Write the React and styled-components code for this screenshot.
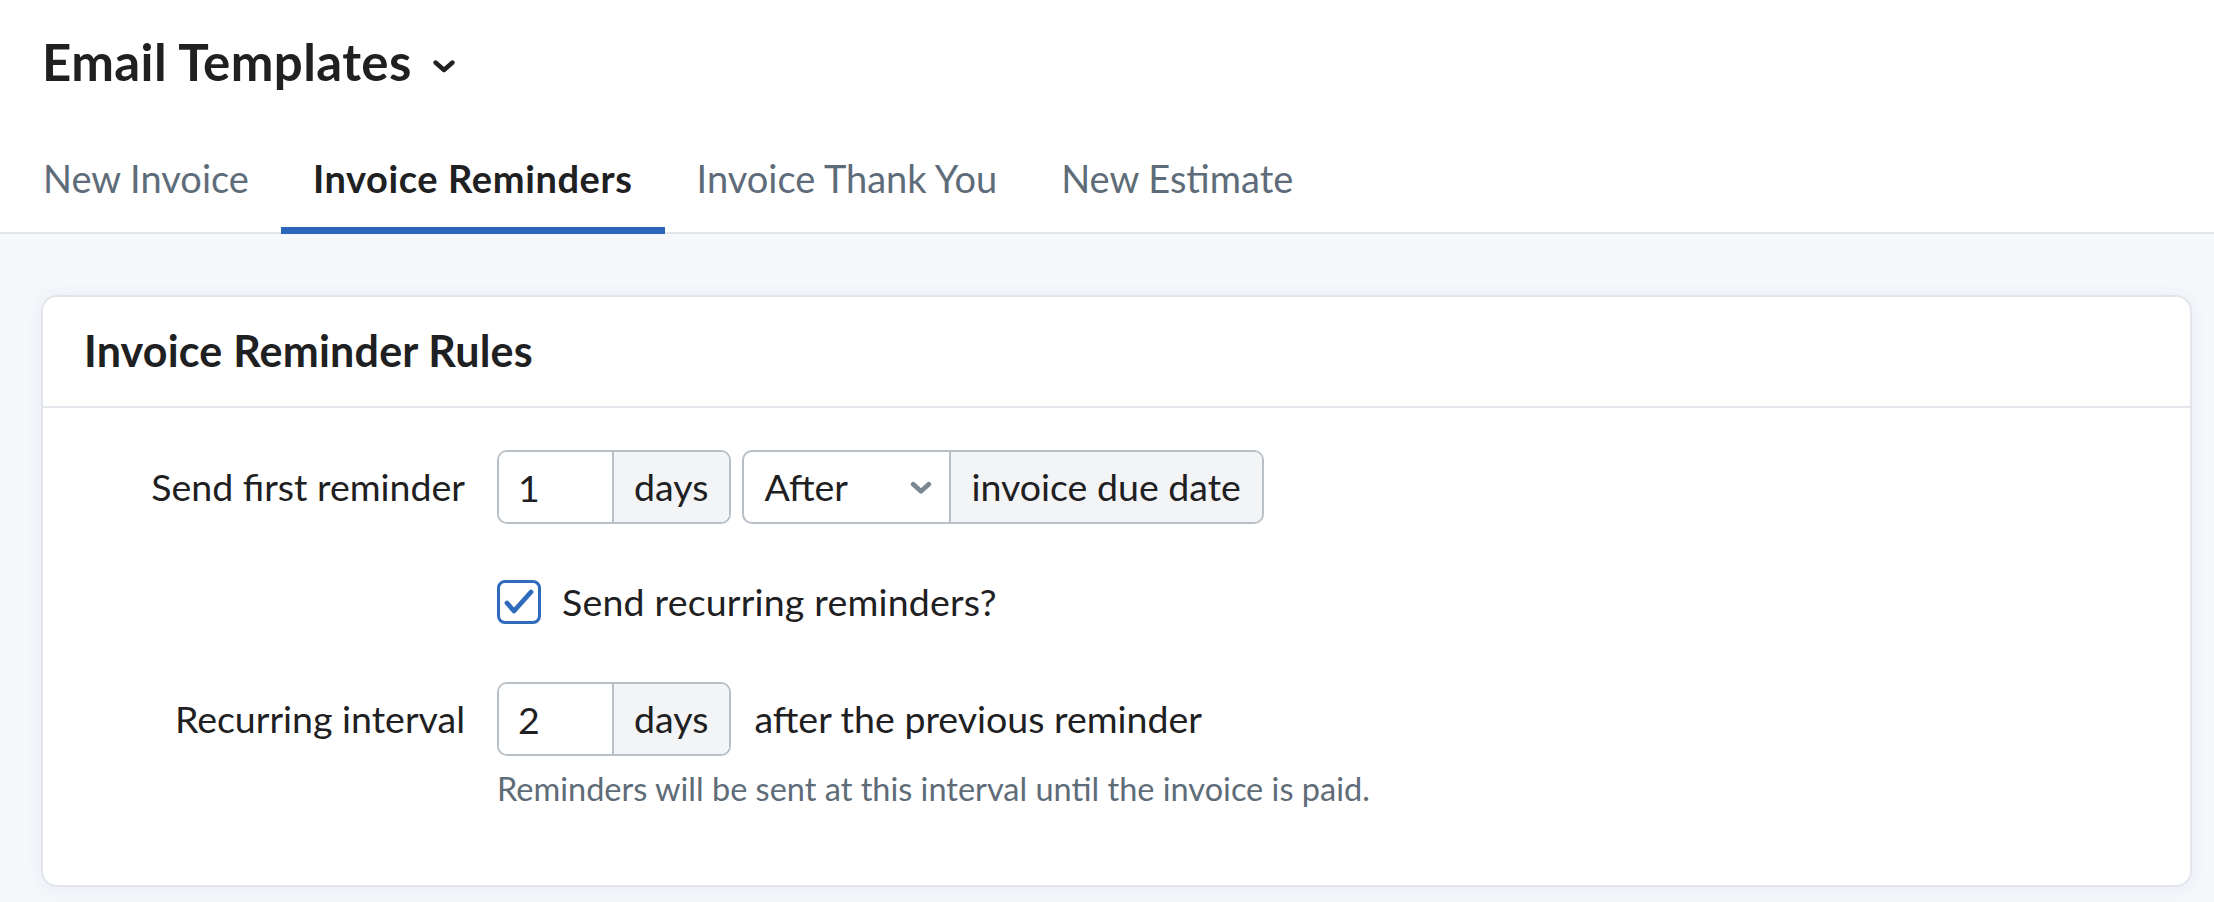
import React, { useState } from 'react';
import styled, { createGlobalStyle } from 'styled-components';

const Global = createGlobalStyle`
  html, body { margin: 0; padding: 0; }
  body {
    background: #fff;
    font-family: 'Lato', 'Noto Sans', sans-serif;
    color: #1e2022;
  }
  #root { min-height: 100vh; display: flex; flex-direction: column; }
`;

const Page = styled.div`
  flex: 1; display: flex; flex-direction: column;
`;

const TitleRow = styled.div`
  display: flex; align-items: center; gap: 20px;
  margin-top: 32px; padding-left: 42px;
`;

const Title = styled.h1`
  margin: 0;
  font-size: 51px; line-height: 60px; font-weight: 700;
  letter-spacing: 0.4px;
  color: #1e2022;
`;

const TitleCaret = styled.svg`
  width: 24px; height: 14px; margin-top: 8px;
`;

const TabBar = styled.div`
  display: flex;
  margin-top: 63px; padding-left: 11px;
  border-bottom: 2px solid #e2e6ea;
`;

const Tab = styled.button`
  appearance: none; background: none; border: 0; cursor: pointer;
  font-family: inherit;
  font-size: 38px; line-height: 46px;
  font-weight: ${(p) => (p.$active ? 700 : 400)};
  letter-spacing: ${(p) => (p.$active ? '0.6px' : '0')};
  color: ${(p) => (p.$active ? '#1e2022' : '#5e6c79')};
  padding: 0 32px 26px;
  border-bottom: 7px solid ${(p) => (p.$active ? '#2b66ba' : 'transparent')};
  margin-bottom: -2px;
`;

const Content = styled.div`
  flex: 1;
  background: #f5f7fb;
  padding: 61px 22px 15px 41px;
`;

const Card = styled.section`
  background: #fff;
  border: 2px solid #e2e5ea;
  border-radius: 16px;
  box-shadow: 0 2px 18px rgba(40, 70, 130, 0.06);
`;

const CardHeader = styled.div`
  padding: 28px 41px 29px;
  border-bottom: 2px solid #e4e7eb;
`;

const CardTitle = styled.h2`
  margin: 0;
  font-size: 43px; line-height: 52px; font-weight: 700;
  letter-spacing: 0.2px;
  color: #1e2022;
`;

const CardBody = styled.div`
  display: grid;
  grid-template-columns: 422px auto;
  column-gap: 32px;
  padding: 42px 0 76px;
`;

const Label = styled.label`
  grid-column: 1;
  text-align: right;
  align-self: center;
  margin-top: ${(p) => p.$top || 0}px;
  font-size: 37.5px; line-height: 46px;
  color: #1e2022;
`;

const Controls = styled.div`
  grid-column: 2;
  display: flex; align-items: center; gap: ${(p) => p.$gap || 11}px;
  margin-top: ${(p) => p.$top || 0}px;
`;

const Group = styled.div`
  display: inline-flex;
  height: 74px;
  box-sizing: border-box;
  border: 2px solid #b8bfc6;
  border-radius: 10px;
  overflow: hidden;
  background: #fff;
`;

const Field = styled.input`
  box-sizing: border-box;
  width: ${(p) => p.$w}px;
  border: 0; outline: none; margin: 0;
  padding: 0 0 0 19px;
  font-family: inherit; font-size: 37.5px;
  color: #1e2022; background: #fff;
`;

const Addon = styled.span`
  display: flex; align-items: center;
  padding: 0 21px 0 20px;
  border-left: 2px solid #b8bfc6;
  background: #f3f4f6;
  font-size: 37.5px; line-height: 46px;
  color: #1e2022;
  white-space: nowrap;
`;

const SelectBox = styled.div`
  display: flex; align-items: center; justify-content: space-between;
  box-sizing: border-box;
  width: 205px;
  padding: 0 17px 0 20px;
  font-size: 37.5px; line-height: 46px;
  color: #1e2022;
  cursor: pointer;
`;

const SelectCaret = styled.svg`
  width: 22px; height: 13px;
`;

const Trailing = styled.span`
  font-size: 37.5px; line-height: 46px;
  color: #1e2022;
  white-space: nowrap;
`;

const CheckRow = styled.label`
  display: flex; align-items: center; gap: 21px;
  font-size: 37.5px; line-height: 46px;
  letter-spacing: 0.2px;
  color: #1e2022;
  cursor: pointer;
`;

const Box = styled.span`
  box-sizing: border-box;
  width: 44px; height: 44px;
  border: 3px solid #2f6bbd;
  border-radius: 8px;
  background: #fff;
  display: flex; align-items: center; justify-content: center;
`;

const Help = styled.div`
  grid-column: 2;
  margin-top: 13px;
  font-size: 32.5px; line-height: 40px;
  color: #5e6c78;
`;

const TABS = ['New Invoice', 'Invoice Reminders', 'Invoice Thank You', 'New Estimate'];

function Chevron({ as: C, color, width }) {
  return (
    <C viewBox="0 0 24 14" fill="none">
      <path d="M3.5 3.5l8.5 7.5 8.5-7.5" stroke={color} strokeWidth={width} strokeLinecap="round" strokeLinejoin="round" />
    </C>
  );
}

export default function App() {
  const [active, setActive] = useState(1);
  const [checked, setChecked] = useState(true);

  return (
    <Page>
      <Global />
      <TitleRow>
        <Title>Email Templates</Title>
        <Chevron as={TitleCaret} color="#1e2022" width={4.4} />
      </TitleRow>

      <TabBar>
        {TABS.map((t, i) => (
          <Tab key={t} $active={i === active} onClick={() => setActive(i)}>{t}</Tab>
        ))}
      </TabBar>

      <Content>
        <Card>
          <CardHeader>
            <CardTitle>Invoice Reminder Rules</CardTitle>
          </CardHeader>

          <CardBody>
            <Label>Send first reminder</Label>
            <Controls>
              <Group>
                <Field $w={113} defaultValue="1" />
                <Addon>days</Addon>
              </Group>
              <Group>
                <SelectBox>
                  <span>After</span>
                  <Chevron as={SelectCaret} color="#7b8792" width={5.2} />
                </SelectBox>
                <Addon>invoice due date</Addon>
              </Group>
            </Controls>

            <Controls $top={55}>
              <CheckRow onClick={() => setChecked((c) => !c)}>
                <Box>
                  {checked && (
                    <svg width="30" height="26" viewBox="0 0 30 26" fill="none">
                      <path d="M3 14l7 8L27 3" stroke="#2f6bbd" strokeWidth="4.8" strokeLinecap="round" strokeLinejoin="round" />
                    </svg>
                  )}
                </Box>
                Send recurring reminders?
              </CheckRow>
            </Controls>

            <Label $top={57}>Recurring interval</Label>
            <Controls $top={57} $gap={23}>
              <Group>
                <Field $w={113} defaultValue="2" />
                <Addon>days</Addon>
              </Group>
              <Trailing>after the previous reminder</Trailing>
            </Controls>
            <Help>Reminders will be sent at this interval until the invoice is paid.</Help>
          </CardBody>
        </Card>
      </Content>
    </Page>
  );
}
